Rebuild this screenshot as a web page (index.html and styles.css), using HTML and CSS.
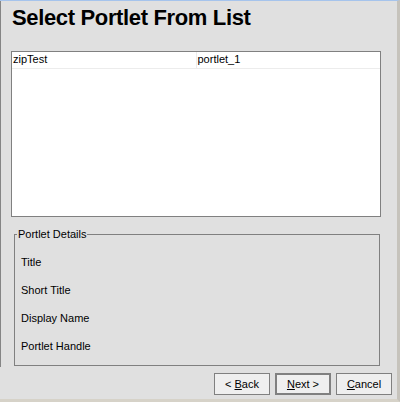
FILE: index.html
```html
<!DOCTYPE html>
<html>
<head>
<meta charset="utf-8">
<link rel="stylesheet" href="styles.css">
</head>
<body>
<div class="window">
  <div class="content">
    <h1 class="title">Select Portlet From List</h1>
    <div class="list">
      <div class="row">
        <div class="cell first">zipTest</div>
        <div class="cell">portlet_1</div>
      </div>
    </div>
    <fieldset class="details">
      <legend class="legend">Portlet Details</legend>
      <div class="field">Title</div>
      <div class="field">Short Title</div>
      <div class="field">Display Name</div>
      <div class="field">Portlet Handle</div>
    </fieldset>
  </div>
  <div class="buttons">
    <button class="btn">&lt; <u>B</u>ack</button>
    <button class="btn default"><u>N</u>ext &gt;</button>
    <button class="btn"><u>C</u>ancel</button>
  </div>
</div>
</body>
</html>
```

FILE: styles.css
```css
html, body {
  margin: 0;
  padding: 0;
  background: #e0e0e0;
}
.window {
  width: 400px;
  height: 402px;
  box-sizing: border-box;
  background: #e0e0e0;
  border-top: 1px solid #a6c4ec;
  border-right: 3px solid #c6c3bc;
  border-bottom: 3px solid #d6d2c8;
  display: flex;
  flex-direction: column;
  font-family: "Liberation Sans", Arial, sans-serif;
  font-size: 11px;
  color: #000;
}
.content {
  height: 366px;
  flex-shrink: 0;
  border-left: 1px solid #858585;
  display: flex;
  flex-direction: column;
  box-sizing: border-box;
}
.title {
  flex-shrink: 0;
  margin: 3px 0 0 11px;
  font-size: 22px;
  font-weight: bold;
  letter-spacing: -0.35px;
  line-height: 28px;
  height: 28px;
}
.list {
  flex-shrink: 0;
  margin: 19px 0 0 10px;
  width: 370px;
  height: 166px;
  box-sizing: border-box;
  border: 1px solid #808080;
  background: #fff;
}
.row {
  display: flex;
  height: 16px;
  border-bottom: 1px solid #ececec;
}
.cell {
  width: 183px;
  padding-left: 1px;
  line-height: 15px;
}
.cell.first {
  border-right: 1px solid #ececec;
}
.details {
  flex-shrink: 0;
  margin: 11px 0 0 13px;
  width: 366px;
  height: 138px;
  box-sizing: border-box;
  border: 1px solid #808080;
  padding: 0 0 0 2px;
  min-width: 0;
}
.legend {
  padding: 0 1px;
  margin-left: 0;
  line-height: 13px;
}
.field {
  height: 28px;
  line-height: 28px;
  padding-left: 4px;
}
.field:first-of-type {
  margin-top: 7px;
}
.buttons {
  flex: 1;
  display: flex;
  justify-content: flex-end;
  align-items: flex-start;
  gap: 5px;
  padding: 6px 5px 0 0;
}
.btn {
  width: 56px;
  height: 22px;
  box-sizing: border-box;
  background: #efefef;
  border: 1px solid #808080;
  font-family: "Liberation Sans", Arial, sans-serif;
  font-size: 11px;
  color: #000;
  padding: 0;
  margin: 0;
}
.btn.default {
  border: 2px solid #808080;
}
```
